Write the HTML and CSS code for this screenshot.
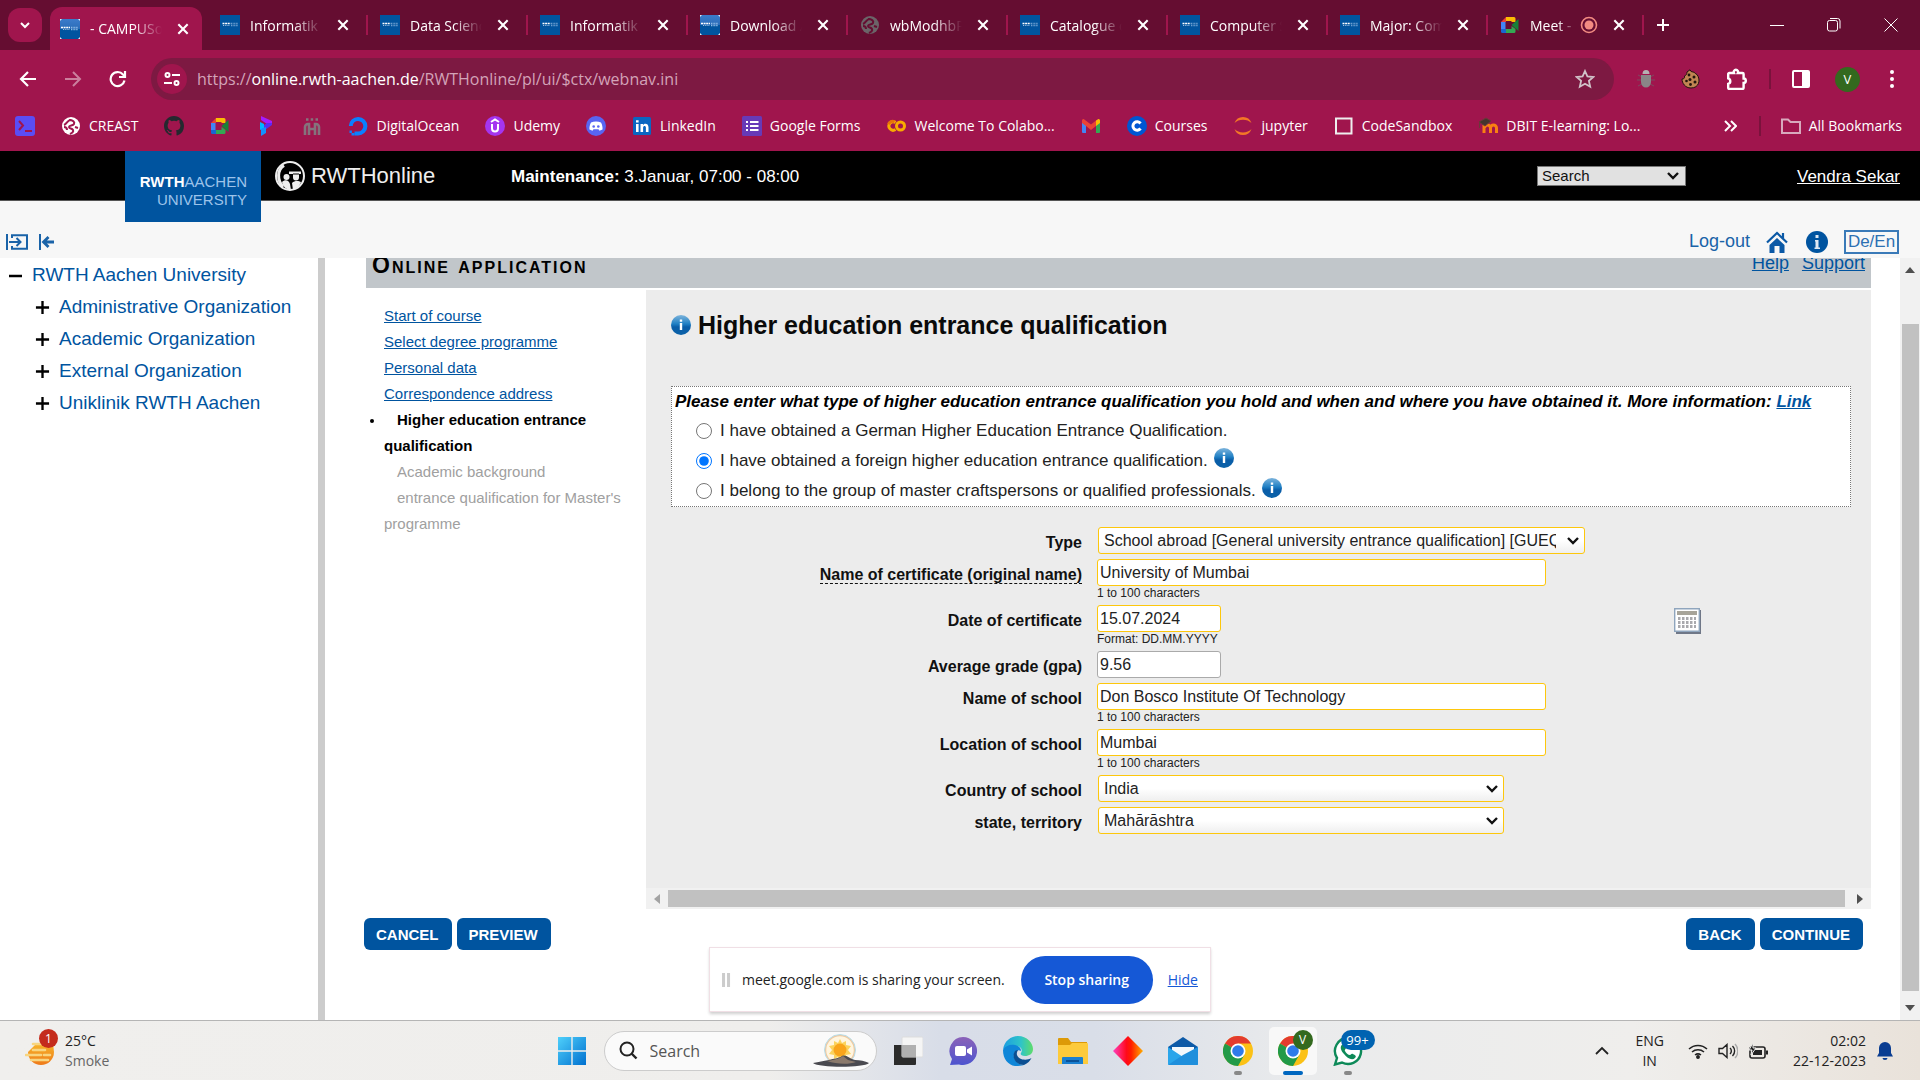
FILE: index.html
```html
<!DOCTYPE html>
<html lang="en">
<head>
<meta charset="utf-8">
<title>CAMPUSonline - Online application</title>
<link rel="stylesheet" href="styles.css">
</head>
<body>
<svg class="defs" aria-hidden="true">
  <defs>
    <linearGradient id="gInfo" x1="0" y1="0" x2="0" y2="1"><stop offset="0" stop-color="#7db4dc"/><stop offset=".45" stop-color="#1f7fc4"/><stop offset=".6" stop-color="#0a5da8"/><stop offset="1" stop-color="#0b62a8"/></linearGradient>
    <linearGradient id="gFav" x1="0" y1="0" x2="0" y2="1"><stop offset="0" stop-color="#3c7ccb"/><stop offset=".5" stop-color="#2a6cb8"/><stop offset=".5" stop-color="#00549f"/><stop offset="1" stop-color="#00549f"/></linearGradient>
    <linearGradient id="gWin" x1="0" y1="0" x2="1" y2="1"><stop offset="0" stop-color="#4fd0fb"/><stop offset="1" stop-color="#0070cf"/></linearGradient>
    <linearGradient id="gEdge" x1="0" y1="0" x2="1" y2="0"><stop offset="0" stop-color="#1b9de2"/><stop offset=".6" stop-color="#2fc4c8"/><stop offset="1" stop-color="#5fdc6a"/></linearGradient>
    <linearGradient id="gDia" x1="0" y1="0" x2="1" y2="0"><stop offset="0" stop-color="#ff3fc0"/><stop offset=".45" stop-color="#ff0a1a"/><stop offset=".6" stop-color="#ff1d00"/><stop offset="1" stop-color="#ffae00"/></linearGradient>
    <linearGradient id="gChat" x1="0" y1="0" x2="0" y2="1"><stop offset="0" stop-color="#8b62b8"/><stop offset="1" stop-color="#4d54cf"/></linearGradient>
    <linearGradient id="gBall" x1="0" y1="0" x2="0" y2="1"><stop offset="0" stop-color="#f7b62c"/><stop offset="1" stop-color="#ee7a1a"/></linearGradient>
    <symbol id="x" viewBox="0 0 12 12"><path d="M2 2l8 8M10 2l-8 8" stroke="currentColor" stroke-width="1.8" fill="none"/></symbol>
    <symbol id="rwth" viewBox="0 0 20 20"><path d="M0 0h20v20H0z" fill="#00549f"/><path d="M2.500 8.500h8" stroke="#fff" stroke-width="1.500" stroke-dasharray="2 .6"/><path d="M3 10.500h7" stroke="#9dbfe0" stroke-width="1" stroke-dasharray="1 .8"/><path d="M11 8.500h7M11 10.500h7" stroke="#6d9fd0" stroke-width="1.500" stroke-dasharray="1 .6"/></symbol>
    <symbol id="rwth2" viewBox="0 0 20 20"><path d="M0 0h20v20H0z" fill="url(#gFav)"/><path d="M0 0h2L0 2zM20 0h-2l2 2zM0 20h2l-2-2zM20 20h-2l2-2z" fill="#dce8f4"/><path d="M1 8.500h9" stroke="#fff" stroke-width="1.500" stroke-dasharray="2 .6"/><path d="M3 10.500h7" stroke="#9dbfe0" stroke-width="1" stroke-dasharray="1 .8"/><path d="M11 8.500h7M11 10.500h7" stroke="#8ebae5" stroke-width="1.500" stroke-dasharray="1 .6"/></symbol>
    <symbol id="globe" viewBox="0 0 20 20"><circle cx="10" cy="10" r="9" fill="currentColor"/><path d="M3 9c3-1 3-5 7-5M8 4c4 0 6 2 5 4s-5 1-5 3 3 1 4 3-1 3-3 4M3 11c2 0 3 1 3 3M14 11l3 1" fill="none" stroke="var(--cut)" stroke-width="2"/></symbol>
    <symbol id="meet" viewBox="0 0 20 20"><path d="M6 2h8a1.500 1.500 0 0 1 1.500 1.500V7h-4V6H6z" fill="#fbbc04"/><path d="M6 2v5H1z" fill="#ea4335"/><path d="M1 7h4.500v7H1z" fill="#4285f4"/><path d="M1 14h5v4H2.500A1.500 1.500 0 0 1 1 16.500z" fill="#1967d2"/><path d="M6 14h5.500v-3l4 3v2.500A1.500 1.500 0 0 1 14 18H6z" fill="#34a853"/><path d="M11.500 10l7-6v12z" fill="#188038"/></symbol>
    <symbol id="infoBall" viewBox="0 0 20 20"><circle cx="10" cy="10" r="10" fill="url(#gInfo)"/><path d="M8.800 4.500h2.400v2.200H8.800zM8.800 8h2.400v7H8.800z" fill="#fff"/></symbol>
    <symbol id="chrome" viewBox="0 0 30 30"><circle cx="15" cy="15" r="15" fill="#fbc116"/><path d="M15 15L2 7.500A15 15 0 0 1 28 7.500H15z" fill="#e33b2e"/><path d="M2 7.500A15 15 0 0 0 15 30l6.500-11.500L15 15z" fill="#229a48"/><circle cx="15" cy="15" r="7.500" fill="#fff"/><circle cx="15" cy="15" r="5.800" fill="#2f7bea"/></symbol>
    <symbol id="plus" viewBox="0 0 16 16"><path d="M8 1v14M1 8h14" stroke="currentColor" stroke-width="2.500"/></symbol>
  </defs>
</svg>

<header class="browser">
  <div class="tabstrip">
    <button class="tab-menu" aria-label="Search tabs"><svg width="12" height="12" viewBox="0 0 12 12"><path d="M2 4l4 4 4-4" fill="none" stroke="currentColor" stroke-width="2"/></svg></button>
    <div class="tab active"><svg class="fav"><use href="#rwth2"/></svg><span class="title">- CAMPUSonline</span><button class="close" aria-label="Close"><svg><use href="#x"/></svg></button></div>
    <div class="tab plain"><svg class="fav"><use href="#rwth"/></svg><span class="title">Informatik B</span><button class="close" aria-label="Close"><svg><use href="#x"/></svg></button></div>
    <div class="tab"><svg class="fav"><use href="#rwth"/></svg><span class="title">Data Science</span><button class="close" aria-label="Close"><svg><use href="#x"/></svg></button></div>
    <div class="tab"><svg class="fav"><use href="#rwth"/></svg><span class="title">Informatik M</span><button class="close" aria-label="Close"><svg><use href="#x"/></svg></button></div>
    <div class="tab"><svg class="fav"><use href="#rwth2"/></svg><span class="title">Download A</span><button class="close" aria-label="Close"><svg><use href="#x"/></svg></button></div>
    <div class="tab"><svg class="fav globe"><use href="#globe"/></svg><span class="title">wbModhbPdf</span><button class="close" aria-label="Close"><svg><use href="#x"/></svg></button></div>
    <div class="tab"><svg class="fav"><use href="#rwth"/></svg><span class="title">Catalogue o</span><button class="close" aria-label="Close"><svg><use href="#x"/></svg></button></div>
    <div class="tab"><svg class="fav"><use href="#rwth"/></svg><span class="title">Computer S</span><button class="close" aria-label="Close"><svg><use href="#x"/></svg></button></div>
    <div class="tab"><svg class="fav"><use href="#rwth"/></svg><span class="title">Major: Computer</span><button class="close" aria-label="Close"><svg><use href="#x"/></svg></button></div>
    <div class="tab last"><svg class="fav"><use href="#meet"/></svg><span class="title short">Meet -</span><svg class="rec" viewBox="0 0 18 18"><circle cx="9" cy="9" r="7.500" fill="none" stroke="currentColor" stroke-width="1.600"/><circle cx="9" cy="9" r="4.500" fill="currentColor"/></svg><button class="close" aria-label="Close"><svg><use href="#x"/></svg></button></div>
    <button class="new-tab" aria-label="New tab"><svg width="14" height="14" viewBox="0 0 14 14"><path d="M7 1v12M1 7h12" stroke="currentColor" stroke-width="2"/></svg></button>
    <div class="window-buttons">
      <button aria-label="Minimize"><svg width="14" height="14" viewBox="0 0 14 14"><path d="M0 7.500h14" stroke="currentColor"/></svg></button>
      <button aria-label="Restore"><svg width="14" height="14" viewBox="0 0 14 14" fill="none" stroke="currentColor"><rect x=".5" y="2.500" width="10" height="10.500" rx="2"/><path d="M3 .5h7.500a2.500 2.500 0 0 1 2.500 2.500v7.500"/></svg></button>
      <button aria-label="Close window"><svg width="14" height="14" viewBox="0 0 14 14"><path d="M.5 .5l13 13M13.500 .5l-13 13" stroke="currentColor"/></svg></button>
    </div>
  </div>

  <div class="toolbar">
    <div class="nav-buttons">
      <button aria-label="Back"><svg width="18" height="18" viewBox="0 0 18 18" fill="none" stroke="currentColor" stroke-width="2.200"><path d="M17 9H3M9 2L2 9l7 7"/></svg></button>
      <button class="dim" aria-label="Forward"><svg width="18" height="18" viewBox="0 0 18 18" fill="none" stroke="currentColor" stroke-width="2"><path d="M1 9h14M9 2l7 7-7 7"/></svg></button>
      <button aria-label="Reload"><svg width="18" height="18" viewBox="0 0 18 18" fill="none" stroke="currentColor" stroke-width="2.200"><path d="M15.500 10.500A7 7 0 1 1 14 4.500L15.500 6"/><path d="M16 1v6h-6"/></svg></button>
    </div>
    <div class="omnibox">
      <span class="site"><svg width="16" height="16" viewBox="0 0 16 16" fill="none" stroke="currentColor" stroke-width="2"><circle cx="3.500" cy="4" r="2"/><path d="M8 4h8M0 12h8"/><circle cx="12.500" cy="12" r="2"/></svg></span>
      <span class="url">https://<b>online.rwth-aachen.de</b>/RWTHonline/pl/ui/$ctx/webnav.ini</span>
      <svg class="star" width="20" height="20" viewBox="0 0 20 20"><path d="M10 2l2.400 5.400 5.900.6-4.400 3.900 1.300 5.800L10 14.700l-5.200 3 1.300-5.800L1.700 8l5.900-.6z" fill="none" stroke="currentColor" stroke-width="1.800"/></svg>
    </div>
    <div class="extensions">
      <svg width="20" height="20" viewBox="0 0 20 20"><path d="M2 6l4 2M18 6l-4 2M1 11h4M19 11h-4M2 17l4-2M18 17l-4-2" stroke="#7d4a60"/><path d="M6.500 5a3.500 4 0 0 1 7 0z" fill="#b5b0b2"/><path d="M5 6h10v7a5 5.500 0 0 1-10 0z" fill="#8a8587"/></svg>
      <svg width="20" height="20" viewBox="0 0 20 20"><path d="M9 .8a3 3 0 0 0 3 2.200c2 0 2 2 4 2.500C20 11 18 19 10 19 4 19 1 14 1 10c2 0 3-1 2.500-3C5 6.500 6 5 6 3z" fill="#c08552" stroke="#22150d"/><g fill="#22150d"><circle cx="8" cy="6" r="1.400"/><circle cx="13" cy="8" r="1.500"/><circle cx="9" cy="10.500" r="1.500"/><circle cx="5.500" cy="12" r="1.300"/><circle cx="14" cy="13" r="1.500"/><circle cx="9.500" cy="15.500" r="1.400"/></g></svg>
      <svg width="22" height="22" viewBox="0 0 20 20"><path d="M2 5.500a1 1 0 0 1 1-1h4.200a2 2 0 1 1 3.600 0H15a1 1 0 0 1 1 1v4a2 2 0 0 1 0 4V18a1 1 0 0 1-1 1H3a1 1 0 0 1-1-1v-3.500a2.600 2.600 0 0 0 0-5z" fill="none" stroke="#fff" stroke-width="2.200"/></svg>
      <i class="rule"></i>
      <svg width="18" height="18" viewBox="0 0 18 18"><rect x="1" y="1" width="16" height="16" rx="1" fill="none" stroke="#fff" stroke-width="2"/><path d="M10 1h7v16h-7z" fill="#fff"/></svg>
      <span class="avatar">V</span>
      <svg class="menu-dots" width="4" height="18" viewBox="0 0 4 18" fill="#fff"><circle cx="2" cy="2" r="2"/><circle cx="2" cy="9" r="2"/><circle cx="2" cy="16" r="2"/></svg>
    </div>
  </div>

  <nav class="bookmarks">
    <a href="#" aria-label="Shell"><svg viewBox="0 0 20 20"><rect width="20" height="20" rx="3" fill="#5a4df5"/><path d="M4 5l4 4.500L4 14M10 15h7" fill="none" stroke="#a0154d" stroke-width="2"/></svg></a>
    <a href="#"><svg viewBox="0 0 20 20" class="white-globe"><use href="#globe"/></svg>CREAST</a>
    <a href="#" aria-label="GitHub"><svg viewBox="0 0 16 16"><path fill="#24292f" d="M8 0C3.580 0 0 3.580 0 8c0 3.540 2.290 6.530 5.470 7.590.4.070.55-.17.55-.38 0-.19-.01-.82-.01-1.490-2.010.37-2.530-.49-2.690-.94-.09-.23-.48-.94-.82-1.130-.28-.15-.68-.52-.01-.53.63-.01 1.080.58 1.230.82.72 1.210 1.870.87 2.330.66.07-.52.28-.87.51-1.070-1.780-.2-3.640-.89-3.640-3.950 0-.87.31-1.590.82-2.150-.08-.2-.36-1.020.08-2.120 0 0 .67-.21 2.200.82a7.700 7.700 0 0 1 4 0c1.530-1.040 2.200-.82 2.200-.82.44 1.100.16 1.920.08 2.120.51.56.82 1.270.82 2.150 0 3.070-1.870 3.750-3.650 3.950.29.25.54.73.54 1.480 0 1.070-.01 1.930-.01 2.200 0 .21.150.46.55.38A8 8 0 0 0 16 8c0-4.420-3.580-8-8-8z"/></svg></a>
    <a href="#" aria-label="Meet"><svg><use href="#meet"/></svg></a>
    <a href="#" aria-label="P"><svg viewBox="0 0 20 20"><path d="M5 0l11 5v4l-5-1-6-4z" fill="#a31cff"/><path d="M16 7v2L9 14 4 12l7-5z" fill="#5a2cf0"/><path d="M4 6l4 2v4l-4 2z" fill="#00b7ff"/><path d="M5 13l5-2v6l-5 3z" fill="#1192ff"/></svg></a>
    <a href="#" aria-label="People"><svg viewBox="0 0 20 20" fill="none" stroke="#85737c" stroke-width="2.600"><path d="M3 19V11a3 3 0 0 1 3-3h1v11M17 19v-8a3 3 0 0 0-3-3h-1v11M7 13h6"/><path d="M4 3.500h2.500M8.700 3.500h2.500M13.500 3.500H16"/></svg></a>
    <a href="#"><svg viewBox="0 0 20 20"><path d="M10 19.500v-4A5.300 5.300 0 1 0 4.700 10H.8A9.300 9.300 0 1 1 10 19.500z" fill="#0a80ff"/><path d="M6.500 15.500H10v4H6.500zM3.500 17h2.800v2.500H3.500zM1.500 14.500h2.400v2.400H1.500z" fill="#0a80ff"/></svg>DigitalOcean</a>
    <a href="#"><svg viewBox="0 0 20 20"><circle cx="10" cy="10" r="10" fill="#a435f0"/><path d="M6 6l4-2.500L14 6M7 8v4.500a3 3 0 0 0 6 0V8" fill="none" stroke="#fff" stroke-width="2"/></svg>Udemy</a>
    <a href="#" aria-label="Discord"><svg viewBox="0 0 20 20"><circle cx="10" cy="10" r="10" fill="#5865f2"/><path d="M5 6.500c3-1.500 7-1.500 10 0 1.300 2.500 1.800 5 1.500 7l-3 1.300-1-1.500H7.500l-1 1.500-3-1.300c-.3-2 .2-4.500 1.500-7z" fill="#fff"/><circle cx="7.700" cy="10.500" r="1.300" fill="#5865f2"/><circle cx="12.300" cy="10.500" r="1.300" fill="#5865f2"/></svg></a>
    <a href="#"><svg viewBox="0 0 20 20"><rect x="1" y="1" width="18" height="18" rx="1.500" fill="#0a66c2"/><path d="M4 8h2.600v8H4zM4 4.200h2.600v2.400H4zM8.500 8H11v1.200c1.500-2.300 5.500-1.600 5.500 2V16h-2.600v-4.300c0-2.200-2.800-2-2.800 0V16H8.500z" fill="#fff"/></svg>LinkedIn</a>
    <a href="#"><svg viewBox="0 0 20 20"><rect width="20" height="20" rx="1.500" fill="#673ab7"/><path d="M4 6h2M4 10h2M4 14h2M8 6h8.500M8 10h8.500M8 14h8.500" stroke="#fff" stroke-width="2"/></svg>Google Forms</a>
    <a href="#"><svg viewBox="0 0 20 20" fill="none" stroke-width="3"><circle cx="14.500" cy="10" r="4" stroke="#f9ab00"/><path d="M9.500 6.500A4.200 4.200 0 1 0 9.500 13.500" stroke="#f9ab00"/><path d="M8.500 5.800a4.200 4.200 0 0 0-6 2.500" stroke="#e8710a"/></svg>Welcome To Colabo...</a>
    <a href="#" aria-label="Gmail"><svg viewBox="0 0 20 20"><path d="M1 5v11a1 1 0 0 0 1 1h3V8z" fill="#4285f4"/><path d="M19 5v11a1 1 0 0 1-1 1h-3V8z" fill="#34a853"/><path d="M15 4.500L17 3.200c1-.7 2 .2 2 1.300V7l-4 3z" fill="#fbbc04"/><path d="M1 7V4.500C1 3.400 2 2.500 3 3.200L10 8.500l5-4V10l-5 4-5-4z" fill="#ea4335"/></svg></a>
    <a href="#"><svg viewBox="0 0 20 20"><circle cx="10" cy="10" r="10" fill="#0056d2"/><path d="M13.500 7.500a4.200 4.200 0 1 0 0 5" fill="none" stroke="#fff" stroke-width="3"/></svg>Courses</a>
    <a href="#"><svg viewBox="0 0 20 20" fill="#f37726"><path d="M1.500 7a9 9 0 0 1 17 0c-4-4.500-13-4.500-17 0zM1.500 13a9 9 0 0 0 17 0c-4 4.500-13 4.500-17 0z"/></svg>jupyter</a>
    <a href="#"><svg viewBox="0 0 20 20"><rect x="2" y="2.500" width="15.500" height="15" fill="none" stroke="#eee" stroke-width="2"/></svg>CodeSandbox</a>
    <a href="#"><svg viewBox="0 0 20 20"><path d="M6 17V9M12.500 17v-5a3 3 0 0 0-6 0M18.500 17v-5a3 3 0 0 0-6 0" fill="none" stroke="#f98012" stroke-width="3"/><path d="M1 6l7-4 5 3-6 5zM1.500 6v6" fill="#45352e" stroke="#6a3a38"/></svg>DBIT E-learning: Lo...</a>
    <svg class="more" width="13" height="12" viewBox="0 0 13 12"><path d="M1 1l5 5-5 5M7 1l5 5-5 5" fill="none" stroke="#fff" stroke-width="2"/></svg>
    <i class="rule"></i>
    <a href="#" class="all"><svg viewBox="0 0 20 20"><path d="M1 3.500h6l2.500 2.500H19v11H1z" fill="none" stroke="#d8a9bd" stroke-width="2"/></svg>All Bookmarks</a>
  </nav>
</header>

<div class="page">
  <div class="masthead">
    <a class="brand" href="#"><span><b>RWTH</b>AACHEN</span><span>UNIVERSITY</span></a>
    <a class="product" href="#"><svg width="30" height="30" viewBox="0 0 30 30"><circle cx="15" cy="15" r="14" fill="none" stroke="#eee" stroke-width="2"/><path d="M9 4.500C2 9 2 19 8 26" fill="none" stroke="#eee" stroke-width="3"/><path d="M14 10.500h12v2.500h-2v3.500a3 3 0 0 1-6 0V13h-4z" fill="#eee"/><path d="M18 13h6" stroke="#000"/><circle cx="11.500" cy="16" r="3" fill="#eee"/><path d="M7 21c3-3 7-2 8 2l1 6c-4 0-8-3-9-8zM17 22c3-3 7-2 9-1-1 4-5 7-8 8z" fill="#eee"/></svg>RWTHonline</a>
    <p class="notice"><b>Maintenance:</b> 3.Januar, 07:00 - 08:00</p>
    <select class="site-search" aria-label="Search"><option>Search</option></select>
    <a class="user" href="#">Vendra Sekar</a>
  </div>

  <div class="subhead">
    <div class="tree-tools">
      <button aria-label="Expand navigation"><svg width="22" height="16" viewBox="0 0 22 16" fill="none" stroke="#1a63a8" stroke-width="2"><path d="M1 0v16M6 4V1.200h15v13.600H6V12M3 8h11M10.500 4l4 4-4 4"/></svg></button>
      <button aria-label="Collapse navigation"><svg width="16" height="16" viewBox="0 0 16 16" fill="none" stroke="#1a63a8" stroke-width="2"><path d="M1 0v16"/><path d="M15 8H5M9.500 3L4.500 8l5 5" stroke-width="2.800"/></svg></button>
    </div>
    <a class="logout" href="#">Log-out</a>
    <a href="#" aria-label="Home"><svg width="22" height="22" viewBox="0 0 22 22"><path d="M11 7l7.500 7v8h-5v-7h-5v7h-5v-8z" fill="#0b59a6"/><path d="M1 11.500L11 2l10 9.500M17 2v5" fill="none" stroke="#0b59a6" stroke-width="2.200"/></svg></a>
    <a class="info" href="#" aria-label="Information"><svg width="22" height="22" viewBox="0 0 22 22"><circle cx="11" cy="11" r="11" fill="#0054a0"/><path d="M9.500 4h3v3h-3zM9 9h3.500v7.500H14V18H8.500v-1.500h1v-6H9z" fill="#dfe9f4"/></svg></a>
    <button class="lang">De/En</button>
  </div>

  <div class="frames">
    <nav class="tree">
      <ul>
        <li><svg viewBox="0 0 15 15"><path d="M1 8h13" stroke="currentColor" stroke-width="2.500"/></svg><a href="#">RWTH Aachen University</a></li>
        <li class="child"><svg><use href="#plus"/></svg><a href="#">Administrative Organization</a></li>
        <li class="child"><svg><use href="#plus"/></svg><a href="#">Academic Organization</a></li>
        <li class="child"><svg><use href="#plus"/></svg><a href="#">External Organization</a></li>
        <li class="child"><svg><use href="#plus"/></svg><a href="#">Uniklinik RWTH Aachen</a></li>
      </ul>
    </nav>

    <main class="content">
      <div class="titlebar">
        <h1>Online application</h1>
        <div class="links"><a href="#">Help</a><a href="#">Support</a></div>
      </div>
      <div class="wizard">
        <ol class="steps">
          <li><a href="#">Start of course</a></li>
          <li><a href="#">Select degree programme</a></li>
          <li><a href="#">Personal data</a></li>
          <li><a href="#">Correspondence address</a></li>
          <li class="current">Higher education entrance qualification</li>
          <li class="todo">Academic background</li>
          <li class="todo">entrance qualification for Master's programme</li>
        </ol>
        <section class="panel">
          <div class="panel-body">
            <h2><svg class="ball"><use href="#infoBall"/></svg>Higher education entrance qualification</h2>
            <fieldset class="choice">
              <legend>Please enter what type of higher education entrance qualification you hold and when and where you have obtained it. More information: <a href="#">Link</a></legend>
              <label><input type="radio" name="kind">I have obtained a German Higher Education Entrance Qualification.</label>
              <label><input type="radio" name="kind" checked>I have obtained a foreign higher education entrance qualification.<svg class="ball"><use href="#infoBall"/></svg></label>
              <label><input type="radio" name="kind">I belong to the group of master craftspersons or qualified professionals.<svg class="ball"><use href="#infoBall"/></svg></label>
            </fieldset>
            <form class="fields">
              <div class="row"><label for="type">Type</label><select id="type" class="wide"><option>School abroad [General university entrance qualification] [GUEQ]</option></select></div>
              <div class="row"><label for="cert"><span class="hinted">Name of certificate (original name)</span></label><div><input id="cert" type="text" value="University of Mumbai"><small>1 to 100 characters</small></div></div>
              <div class="row"><label for="date">Date of certificate</label><div><input id="date" class="brief" type="text" value="15.07.2024"><small>Format: DD.MM.YYYY</small></div>
                <button type="button" class="calendar" aria-label="Calendar"><svg width="27" height="26" viewBox="0 0 27 26"><path d="M2 2h25v24H2z" fill="#6f7787"/><path d="M.7 .7h24.600v22.600H.7z" fill="#fff" stroke="#8fa5bd" stroke-width="1.400"/><path d="M3 3h20v4H3z" fill="#a7a499"/><path d="M4 10.500h18M4 14.500h18M4 18.500h18" stroke="#a9a9ad" stroke-width="3" stroke-dasharray="2.500 1.500"/></svg></button></div>
              <div class="row"><label for="gpa">Average grade (gpa)</label><input id="gpa" class="brief optional" type="text" value="9.56"></div>
              <div class="row"><label for="school">Name of school</label><div><input id="school" type="text" value="Don Bosco Institute Of Technology"><small>1 to 100 characters</small></div></div>
              <div class="row"><label for="place">Location of school</label><div><input id="place" type="text" value="Mumbai"><small>1 to 100 characters</small></div></div>
              <div class="row"><label for="country">Country of school</label><select id="country"><option>India</option></select></div>
              <div class="row"><label for="state">state, territory</label><select id="state"><option>Mahārāshtra</option></select></div>
            </form>
          </div>
          <div class="hscroll"><svg width="6" height="10" viewBox="0 0 6 10"><path d="M6 0v10L0 5z" fill="#a3a3a3"/></svg><i></i><svg width="6" height="10" viewBox="0 0 6 10"><path d="M0 0v10l6-5z" fill="#505050"/></svg></div>
        </section>
      </div>
      <div class="actions">
        <button>CANCEL</button><button>PREVIEW</button>
        <span class="spacer"></span>
        <button>BACK</button><button>CONTINUE</button>
      </div>
    </main>
    <div class="vscroll"><svg width="10" height="6" viewBox="0 0 10 6"><path d="M0 6h10L5 0z" fill="#505050"/></svg><i></i><svg width="10" height="6" viewBox="0 0 10 6"><path d="M0 0h10L5 6z" fill="#505050"/></svg></div>
  </div>

  <aside class="sharing">
    <i class="grip"></i>
    <span>meet.google.com is sharing your screen.</span>
    <button>Stop sharing</button>
    <a href="#">Hide</a>
  </aside>
</div>

<footer class="taskbar">
  <div class="weather">
    <div class="weather-icon"><svg width="32" height="38" viewBox="0 0 32 38"><path d="M3 21a13 13 0 0 0 26 0l-1-9H12z" fill="url(#gBall)"/><path d="M8 13h9M8 19h12M1 24h15M6 29h17M19 24h6" stroke="#f8d580" stroke-width="2.600" stroke-linecap="round"/></svg><span>1</span></div>
    <p>25°C<small>Smoke</small></p>
  </div>
  <div class="apps">
    <button aria-label="Start"><svg width="30" height="30" viewBox="0 0 30 30"><path d="M1 1h13.300v13.300H1zM15.700 1H29v13.300H15.700zM1 15.700h13.300V29H1zM15.700 15.700H29V29H15.700z" fill="url(#gWin)"/></svg></button>
    <div class="task-search">
      <svg width="19" height="19" viewBox="0 0 19 19"><circle cx="8" cy="8" r="6.500" fill="none" stroke="#222" stroke-width="2"/><path d="M12.500 12.500l5 5" stroke="#222" stroke-width="2.400"/></svg>
      <input type="text" placeholder="Search" aria-label="Search">
      <svg width="56" height="34" viewBox="0 0 56 34"><circle cx="27" cy="16" r="14.500" fill="#fff5df" stroke="#f0c9a0" stroke-width="1.500"/><circle cx="27" cy="16" r="15.500" fill="none" stroke="#b6dce8"/><path d="M27 5l2 4 4-2v4l5 1-3 4 3 4-5 1v4l-4-2-2 4-2-4-4 2v-4l-5-1 3-4-3-4 5-1V7l4 2z" fill="#fbd35d"/><circle cx="27" cy="16" r="6.500" fill="#f9a51b"/><path d="M0 29c6-1 10-2 16-3 5-2 9-1 13-4 4-2 8 3 13 4 5 0 10 1 14 3-5 5-50 5-56 0z" fill="#4a4a50"/><path d="M14 27c6-1 12-2 16-5l5 4 8 2c-8 3-20 2-29-1z" fill="#8b7a6c"/></svg>
    </div>
    <button aria-label="Task view"><svg width="30" height="30" viewBox="0 0 30 30"><path d="M1 9h22v19a1 1 0 0 1-1 1H1z" fill="#2b2b2b"/><rect x="9" y="1" width="21" height="20" rx="1" fill="#f5f5f5" stroke="#ddd"/><path d="M9 9h14v12H9z" fill="#b0b0b0"/></svg></button>
    <button aria-label="Chat"><svg width="30" height="30" viewBox="0 0 30 30"><path d="M15 1a14 14 0 1 1-4 27.400L2 29l2-6A14 14 0 0 1 15 1z" fill="url(#gChat)"/><rect x="7" y="10" width="11" height="10" rx="2" fill="#fff"/><path d="M19 13.500l5-3v9l-5-3z" fill="#fff"/></svg></button>
    <button aria-label="Edge"><svg width="30" height="30" viewBox="0 0 30 30"><path d="M0 14C1 5 8 0 15 0c9 0 15 7 15 13 0 5-4 7-8 7s-5-2-4-3c2-3 0-7-5-7C6 10 1 13 0 14z" fill="url(#gEdge)"/><path d="M0 14c2-4 7-6 12-5 4 1 6 3 6 6-4-2-8 1-7 6 1 4 5 8 10 8-3 1-6 1-9 1C5 29 0 23 0 14z" fill="#0f86d8"/><path d="M11 17c-2 6 3 12 10 12 4-2 6-4 7.500-7-5 3-13 2-14.500-3-.5-2 0-3 1-5-2 0-3.500 1-4 3z" fill="#0b4f92"/></svg></button>
    <button aria-label="File Explorer"><svg width="30" height="30" viewBox="0 0 30 30"><path d="M0 3a1 1 0 0 1 1-1h9l3 4h16v8H0z" fill="#dd9a08"/><path d="M0 9h12l2-2h15a1 1 0 0 1 1 1v20H0z" fill="#fdca3b"/><path d="M4 22a1 1 0 0 1 1-1h19a1 1 0 0 1 1 1v6H4z" fill="#1a7fd0"/><path d="M8 25h13" stroke="#0a5299" stroke-width="2"/></svg></button>
    <button aria-label="Diamond"><svg width="30" height="30" viewBox="0 0 30 30"><path d="M15 0l15 15-15 15L0 15z" fill="url(#gDia)"/></svg></button>
    <button aria-label="Mail"><svg width="30" height="30" viewBox="0 0 30 30"><path d="M0 11L15 1l15 10v4H0z" fill="#0d5aa7"/><path d="M4 11h22v12H4z" fill="#f3f8fc"/><path d="M0 11l15 10 15-10v17a1 1 0 0 1-1 1H1a1 1 0 0 1-1-1z" fill="#2aa5ea"/><path d="M0 29l15-10 15-8v17a1 1 0 0 1-1 1z" fill="#1f8fdc"/></svg></button>
    <button class="running" aria-label="Chrome"><svg width="30" height="30"><use href="#chrome"/></svg></button>
    <button class="current" aria-label="Chrome, profile V"><svg width="30" height="30"><use href="#chrome"/></svg><span class="profile">V</span></button>
    <button class="running" aria-label="WhatsApp"><svg width="30" height="30" viewBox="0 0 30 30"><path d="M15 2a13 13 0 1 1-6 24.500L2 28.500l2-6.500A13 13 0 0 1 15 2z" fill="#fff" stroke="#0e8a59" stroke-width="2.400"/><path d="M10 8c3 0 2 3 3 4 0 1-2 2-1 3 1 2 3 4 5 4 1 0 1-2 3-1s4 2 2 4c-3 3-8 0-11-4-3-3-5-8-1-10z" fill="#0e8a59"/></svg><span class="count">99+</span></button>
  </div>
  <div class="tray">
    <svg width="14" height="9" viewBox="0 0 14 9"><path d="M1 8l6-6 6 6" fill="none" stroke="#222" stroke-width="1.800"/></svg>
    <p class="ime">ENG<br>IN</p>
    <svg width="20" height="16" viewBox="0 0 20 16" fill="none" stroke="#222" stroke-width="1.500"><path d="M1 6a13 13 0 0 1 18 0M4 9a9 9 0 0 1 12 0M7 12a5 5 0 0 1 6 0"/><circle cx="10" cy="14" r="1.200" fill="#222"/></svg>
    <svg width="20" height="16" viewBox="0 0 20 16" fill="none" stroke="#222" stroke-width="1.400"><path d="M1 5.500h3.500L9 1.500v13L4.500 10.500H1zM12 5a4 4 0 0 1 0 6"/><path d="M14.500 3a7 7 0 0 1 0 10" /><path d="M17 1a10 10 0 0 1 0 14" stroke="#aaa"/></svg>
    <svg width="20" height="16" viewBox="0 0 20 16"><rect x="2" y="4" width="15" height="11" rx="2" fill="none" stroke="#222" stroke-width="1.600"/><path d="M5 7h9v5H5zM18 7.500h2v4h-2z" fill="#222"/><path d="M5 0L1 7h3l-1 5 5-7H5z" fill="#222" stroke="#ecebe9"/></svg>
    <p class="clock">02:02<br>22-12-2023</p>
    <svg width="18" height="20" viewBox="0 0 18 20"><path d="M9 1a6 6 0 0 1 6 6v5l2 3.500H1L3 12V7a6 6 0 0 1 6-6z" fill="#0a3d91"/><path d="M6.500 17h5a2.500 2 0 0 1-5 0z" fill="#0a3d91"/></svg>
  </div>
</footer>
</body>
</html>
```
FILE: styles.css
```css
:root {
  --wine: #a0154d;
  --wine-dark: #650d31;
  --blue: #00549f;
  --ui: "Open Sans", "Noto Sans", sans-serif;
  --web: "Liberation Sans", Arial, sans-serif;
  --chevron: url("data:image/svg+xml,%3Csvg xmlns='http://www.w3.org/2000/svg' viewBox='0 0 12 8'%3E%3Cpath d='M1 1l5 5 5-5' fill='none' stroke='%23111' stroke-width='2.4'/%3E%3C/svg%3E");
}
* { box-sizing: border-box; }
body {
  margin: 0;
  min-height: 100vh;
  display: flex;
  flex-direction: column;
  font-family: var(--web);
  background: #fff;
  overflow: hidden;
}
button { font: inherit; color: inherit; border: 0; background: none; padding: 0; }
select { appearance: none; background: var(--chevron) no-repeat right 6px center / 12px 8px; }
p, h1, h2, ul, ol { margin: 0; padding: 0; }
ul, ol { list-style: none; }
svg { display: block; flex: none; }
.defs { position: absolute; width: 0; height: 0; }

/* browser window */
.browser { background: var(--wine); color: #fff; font-family: var(--ui); font-size: 14px; }
.tabstrip { display: flex; align-items: center; height: 50px; background: var(--wine-dark); }
.tab-menu {
  flex: none; width: 34px; height: 34px; margin: 0 8px;
  display: grid; place-items: center;
  border-radius: 12px; background: var(--wine);
}
.tab {
  flex: 0 1 160px; min-width: 0; height: 20px; padding: 0 16px 0 12px;
  display: flex; align-items: center; border-left: 2px solid var(--wine);
}
.tab.plain { border-left-color: transparent; }
.tab.active {
  flex-basis: 152px; height: 43px; align-self: flex-end;
  border-left: 0; padding: 0 12px 0 10px; margin-right: 4px;
  border-radius: 12px 12px 0 0; background: var(--wine);
}
.tab.last { flex-basis: 158px; border-right: 2px solid var(--wine); }
.fav { width: 20px; height: 20px; margin-right: 10px; }
.fav.globe { color: #6b6468; --cut: var(--wine-dark); }
.white-globe { color: #fff; --cut: var(--wine); }
.title {
  flex: 1; overflow: hidden; white-space: nowrap; margin-right: 14px;
  -webkit-mask-image: linear-gradient(90deg, #000 60%, transparent);
  mask-image: linear-gradient(90deg, #000 60%, transparent);
}
.title.short { margin-right: 4px; }
.rec { width: 18px; height: 18px; margin-right: 14px; color: #f28b82; }
.close svg { width: 14px; height: 14px; }
.new-tab { margin-left: 12px; }
.window-buttons { margin-left: auto; display: flex; gap: 43px; padding-right: 22px; }

.toolbar { display: flex; align-items: center; height: 58px; }
.nav-buttons { display: flex; gap: 27px; padding: 0 24px 0 19px; }
.dim { opacity: .45; }
.omnibox {
  flex: 1; display: flex; align-items: center; height: 42px;
  border-radius: 21px; background: #7d1942; padding: 0 19px 0 6px;
}
.site { display: grid; place-items: center; width: 30px; height: 30px; border-radius: 50%; background: var(--wine); }
.url { flex: 1; margin-left: 10px; font-size: 16px; color: #d3a3b8; }
.url b { font-weight: 400; color: #fff; }
.star { color: #d0c2c8; }
.extensions { display: flex; align-items: center; gap: 25px; padding: 0 26px 0 22px; }
.rule { width: 2px; height: 20px; background: #7a123c; }
.extensions .rule { margin: 0 -4px; }
.menu-dots { margin-left: 5px; }
.avatar { display: grid; place-items: center; width: 25px; height: 25px; border-radius: 50%; background: #33691e; font-size: 13px; }

.bookmarks { display: flex; align-items: center; gap: 26px; height: 43px; padding: 0 18px 8px 15px; white-space: nowrap; }
.bookmarks a { display: flex; align-items: center; gap: 8px; color: #fff; text-decoration: none; }
.bookmarks a svg { width: 20px; height: 20px; }
.bookmarks .more { margin-left: auto; margin-right: -4px; }
.bookmarks .rule { margin-right: -6px; }

/* web page */
.page { flex: 1; display: flex; flex-direction: column; position: relative; }
.masthead { display: flex; height: 50px; background: #000; color: #fff; padding-left: 125px; padding-right: 20px; align-items: center; border-bottom: 1px solid #555; }
.brand {
  align-self: flex-start; width: 136px; height: 71px; padding: 22px 14px 0 0;
  display: flex; flex-direction: column; align-items: flex-end; z-index: 1;
  background: var(--blue); color: #9cc3ea; text-decoration: none;
  font-size: 15px; line-height: 18px;
}
.brand b { color: #fff; }
.product { display: flex; align-items: center; gap: 6px; width: 250px; padding-left: 14px; font-size: 22px; color: #eee; text-decoration: none; }
.notice { flex: 1; padding-top: 2px; font-size: 17px; }
.site-search { width: 149px; height: 20px; margin-right: 111px; border: 1px solid #777; background-color: #e1e1e1; font: 15px/18px var(--web); color: #111; padding: 0 20px 0 4px; }
.user { padding-top: 2px; color: #fff; font-size: 17px; }

.subhead { display: flex; align-items: center; height: 57px; padding: 24px 21px 0 6px; background: #f7f7f7; }
.tree-tools { display: flex; gap: 11px; flex: 1; }
.logout { color: #1a63a8; font-size: 18px; text-decoration: none; margin-right: 16px; }
.info { margin: 0 16px 0 18px; }
.lang { height: 24px; width: 55px; border: 2px solid #3a7ab8; color: #2c70b3; font-size: 17px; line-height: 20px; }

.frames { flex: 1; display: flex; }
.tree { flex: 0 0 325px; padding-top: 1px; border-right: 7px solid #ccc; }
.tree li { display: flex; align-items: center; gap: 9px; height: 32px; padding-left: 8px; font-size: 19px; }
.tree .child { padding-left: 35px; }
.tree svg { width: 15px; height: 15px; }
.tree a { color: var(--blue); text-decoration: none; }

.content { flex: 1; padding: 0 29px 0 41px; overflow: hidden; }
.titlebar { display: flex; justify-content: space-between; height: 44px; margin-top: -14px; padding: 7px 6px 0; background: #c1c6ca; }
.titlebar h1 { font-size: 23px; line-height: 28px; font-variant: small-caps; letter-spacing: 2px; }
.links { display: flex; gap: 13px; font-size: 18px; line-height: 24px; }
.links a, .steps a, legend a { color: var(--blue); }
.wizard { display: flex; margin-top: 2px; }
.steps { flex: 0 0 280px; padding: 13px 20px 0 18px; font-size: 15px; line-height: 26px; }
.current, .todo { text-indent: 13px; }
.steps .current { font-weight: 700; position: relative; }
.steps .current::before {
  content: ""; position: absolute; left: -14px; top: 12px;
  width: 4px; height: 4px; border-radius: 50%; background: #000;
}
.todo { color: #a0a0a0; }

.panel { flex: 1; min-width: 0; background: #ececec; }
.panel-body { padding: 18px 20px 54px 25px; }
.panel h2 { display: flex; align-items: center; gap: 7px; font-size: 25px; line-height: 34px; color: #0a0a0a; }
.ball { width: 20px; height: 20px; }
.choice { min-width: 0; margin: 44px 0 20px; padding: 1px 3px 0; border: 1px dotted #777; background: #fff; font-size: 17px; color: #222; }
.choice legend { float: left; width: 100%; padding: 0; font-weight: 700; font-style: italic; line-height: 28px; color: #000; white-space: nowrap; }
.choice label { clear: both; display: flex; align-items: center; height: 30px; padding-left: 21px; }
.choice input { width: 16px; height: 16px; margin: 0 8px 0 0; }
.choice .ball { margin: 0 0 6px 6px; }

.fields { display: flex; flex-direction: column; gap: 5px; }
.row { display: grid; grid-template-columns: 411px 577px auto; column-gap: 15px; align-items: start; justify-content: start; }
.row label { font-size: 16px; line-height: 31px; height: 27px; font-weight: 700; color: #111; text-align: right; }
.hinted { border-bottom: 1px dashed #111; line-height: 17px; display: inline-block; }
.row input, .row select {
  display: block; width: 449px; height: 27px; padding: 0 2px;
  border: 1px solid #fdc70c; border-radius: 3px; background-color: #fff;
  font: 16px var(--web); color: #222;
}
.row select {
  width: 406px; margin-left: 1px; padding: 0 28px 0 5px;
  background: var(--chevron) no-repeat right 5px center / 12px 8px, linear-gradient(#fff 50%, #efefef);
}
.row select.wide { width: 487px; }
.row input.brief { width: 124px; }
.row input.optional { border-color: #aaa; }
.row small { display: block; font-size: 12px; line-height: 14px; color: #222; }
.calendar { margin: 3px 0 0 -15px; }

.hscroll { display: flex; align-items: center; gap: 8px; height: 21px; padding: 0 8px; background: #f1f1f1; }
.hscroll i { flex: 1; height: 17px; background: #c1c1c1; }
.hscroll svg:last-child { margin-left: 4px; }
.actions { display: flex; gap: 5px; padding: 9px 8px 0 0; margin-left: -2px; }
.actions button { height: 32px; padding: 0 13px 0 12px; border-radius: 6px; background: var(--blue); color: #fff; font-size: 15px; font-weight: 700; }
.spacer { flex: 1; }

.vscroll { flex: 0 0 20px; display: flex; flex-direction: column; align-items: center; background: #f1f1f1; padding: 9px 0; }
.vscroll i { flex: 1; width: 17px; margin: 51px 0 14px; background: #c1c1c1; }

.sharing {
  position: absolute; left: 50%; transform: translateX(-50%); bottom: 8px;
  display: flex; align-items: center; height: 65px; padding: 0 12px; white-space: nowrap;
  background: #fff; border: 1px solid #f0dfe5; box-shadow: 0 2px 3px #0003;
  font-family: var(--ui); font-size: 14px; color: #222;
}
.grip { width: 8px; height: 14px; margin-right: 12px; border: solid #ccc; border-width: 0 3px; }
.sharing button { width: 132px; height: 48px; margin: 0 15px 0 16px; border-radius: 24px; background: #1558d6; color: #fff; font-weight: 600; }
.sharing a { color: #1558d6; }

/* task bar */
.taskbar {
  display: flex; align-items: center; height: 60px; border-top: 1px solid #b5b5b5;
  background: linear-gradient(90deg, #f0efed 0, #efeeec 40%, #d8dde8 49%, #d9dee8 57%, #eaebec 68%, #efeeec 85%, #e9e2da 100%);
  font-family: var(--ui); font-size: 14px; line-height: 20px; color: #222;
}
.weather { flex: 1; display: flex; gap: 8px; padding-left: 25px; }
.weather-icon { position: relative; }
.weather-icon span {
  position: absolute; left: 14px; top: -2px; width: 19px; height: 19px; border-radius: 50%;
  background: #c42b1c; color: #fff; text-align: center; font-size: 12px; line-height: 19px;
}
.weather small { display: block; font-size: 14px; color: #666; }
.apps { display: flex; align-items: center; gap: 25px; }
.apps button { position: relative; width: 30px; height: 30px; }
.task-search {
  display: flex; align-items: center; width: 273px; height: 40px; margin: 0 -9px 0 -8px; padding: 0 7px 0 14px;
  border: 1px solid #ccc; border-radius: 20px; background: #fafafa;
}
.task-search input { flex: 1; min-width: 0; border: 0; background: none; padding: 0 12px; font: 16px var(--ui); }
.task-search input::placeholder { color: #555; }
.running::after, .apps .current::after {
  content: ""; position: absolute; left: 11px; top: 35px; width: 8px; height: 4px; border-radius: 2px; background: #888;
}
.apps .current { z-index: 0; text-indent: 0; }
.apps .current::before { content: ""; position: absolute; z-index: -1; inset: -9px; border-radius: 5px; background: #f8f8f8; }
.apps .current::after { left: 5px; width: 20px; background: #0067c0; }
.profile, .count { position: absolute; color: #fff; text-align: center; line-height: 20px; }
.profile { left: 15px; top: -6px; width: 20px; height: 20px; border-radius: 50%; background: #33691e; font-size: 12px; }
.count { left: 8px; top: -6px; width: 34px; height: 20px; border-radius: 10px; background: #0063b1; font-size: 13px; }
.tray { flex: 1; display: flex; align-items: center; justify-content: flex-end; gap: 10px; padding-right: 26px; }
.ime { margin: 0 14px 0 16px; text-align: center; }
.clock { margin-left: 15px; text-align: right; }
```
